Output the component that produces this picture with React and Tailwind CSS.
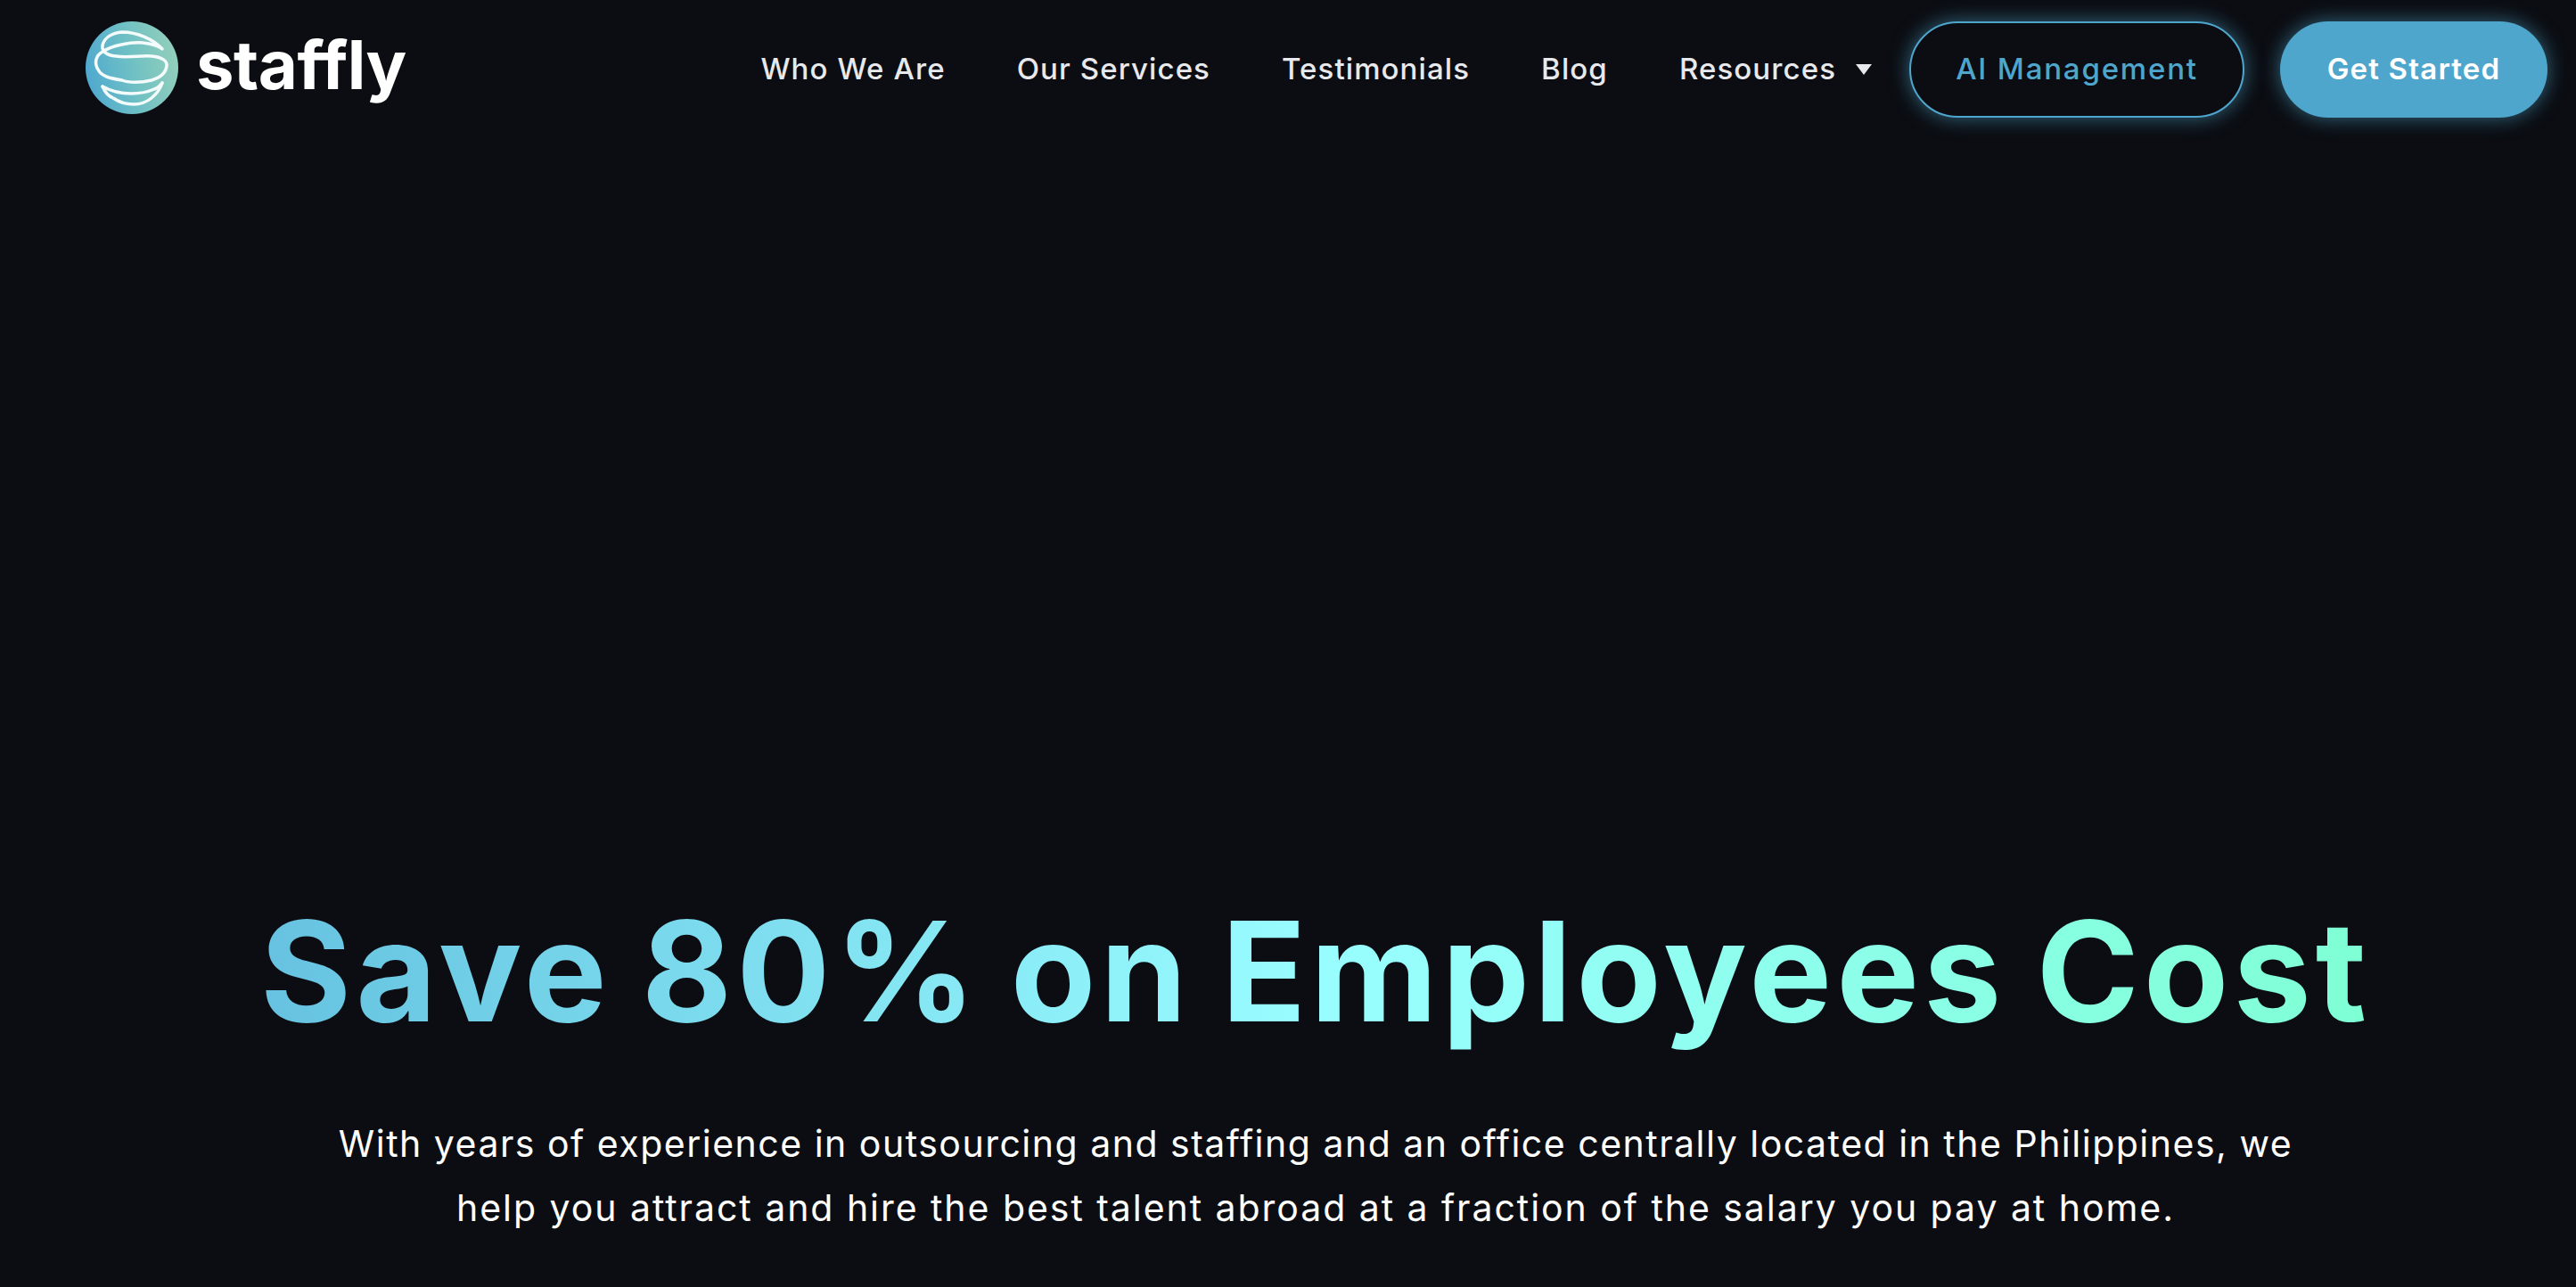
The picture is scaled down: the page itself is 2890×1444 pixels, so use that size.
import React from 'react';

const navLinks = ['Who We Are', 'Our Services', 'Testimonials', 'Blog'];

const LogoMark = () => (
  <svg viewBox="0 0 104 104" className="w-[104px] h-[104px] shrink-0">
    <defs>
      <linearGradient id="logoFill" x1="0" y1="0.6" x2="1" y2="0.4">
        <stop offset="0" stopColor="#4fa9cf" />
        <stop offset="0.5" stopColor="#6fc0c4" />
        <stop offset="1" stopColor="#93cfbb" />
      </linearGradient>
    </defs>
    <circle cx="52" cy="52" r="52" fill="url(#logoFill)" />
    <g fill="none" stroke="#f4fbfb" strokeWidth="3.5" strokeLinecap="round" strokeLinejoin="round">
      <path d="M86 31 C76 20 58 12 41 12 C30 13 21 18 19 27 C18 34 24 38 34 39 C48 41 62 38 74 39 C85 40 92 44 91 50 C90 58 84 63 74 66 C62 69 48 69 41 66 C28 64 18 62 14 54 C9 46 12 38 19 34 C30 27 50 23 64 24 C74 25 81 27 86 31 Z" />
      <path d="M86 69 C83 73 80 75 77 76 C68 80 60 81 51 81 C40 81 28 78 19 73" />
      <path d="M19 73 C22 80 26 84 31 86 C38 91 46 93 54 93 C62 93 69 90 74 86 C80 81 84 75 86 69" />
    </g>
  </svg>
);

const Caret = () => (
  <svg viewBox="0 0 12 8" className="w-[18px] h-3 ml-[22px]">
    <path d="M0 0 H12 L6 8 Z" fill="#e8e9ec" />
  </svg>
);

export default function App() {
  return (
    <div className="min-h-[1444px] bg-[#0b0d12] font-['Inter',sans-serif] overflow-hidden">
      {/* Header */}
      <header className="flex items-center justify-between pl-[96px] pr-[32px] pt-[24px]">
        <div className="flex items-center gap-[20px] pb-[4px]">
          <LogoMark />
          <span className="text-[76px] leading-none font-bold text-white tracking-[-0.5px] pb-[8px]">staffly</span>
        </div>
        <nav className="flex items-center">
          <div className="flex items-center gap-[80px] text-[33px] font-medium tracking-[1.1px] text-[#e8e9ec]">
            {navLinks.map((link) => (
              <a key={link} className="whitespace-nowrap">{link}</a>
            ))}
            <a className="flex items-center whitespace-nowrap">
              Resources
              <Caret />
            </a>
          </div>
          <button className="ml-[42px] w-[376px] h-[108px] rounded-full border-2 border-[#4fa6cd] bg-[#0b0d12] text-[33px] font-medium tracking-[1.8px] text-[#4fa6cd] shadow-[0_0_22px_rgba(79,166,205,0.6)]">
            AI Management
          </button>
          <button className="ml-[40px] w-[300px] h-[108px] rounded-full bg-[#4fa6cd] text-[33px] font-semibold tracking-[1.2px] text-white shadow-[0_0_22px_rgba(79,166,205,0.6)]">
            Get Started
          </button>
        </nav>
      </header>

      {/* Hero */}
      <section className="flex flex-col items-center pl-[62px] pt-[864px] text-center">
        <h1 className="text-[156px] leading-[1.2] font-bold tracking-[5px] [word-spacing:-8px] whitespace-nowrap bg-gradient-to-r from-[#66c2e0] via-[#99fdff] to-[#7fffd4] bg-clip-text text-transparent">
          Save 80% on Employees Cost
        </h1>
        <p className="mt-[64px] text-[41px] leading-[72px] tracking-[1.5px] text-white whitespace-nowrap">
          With years of experience in outsourcing and staffing and an office centrally located in the Philippines, we
          <br />
          <span className="tracking-[1.95px]">help you attract and hire the best talent abroad at a fraction of the salary you pay at home.</span>
        </p>
      </section>
    </div>
  );
}
